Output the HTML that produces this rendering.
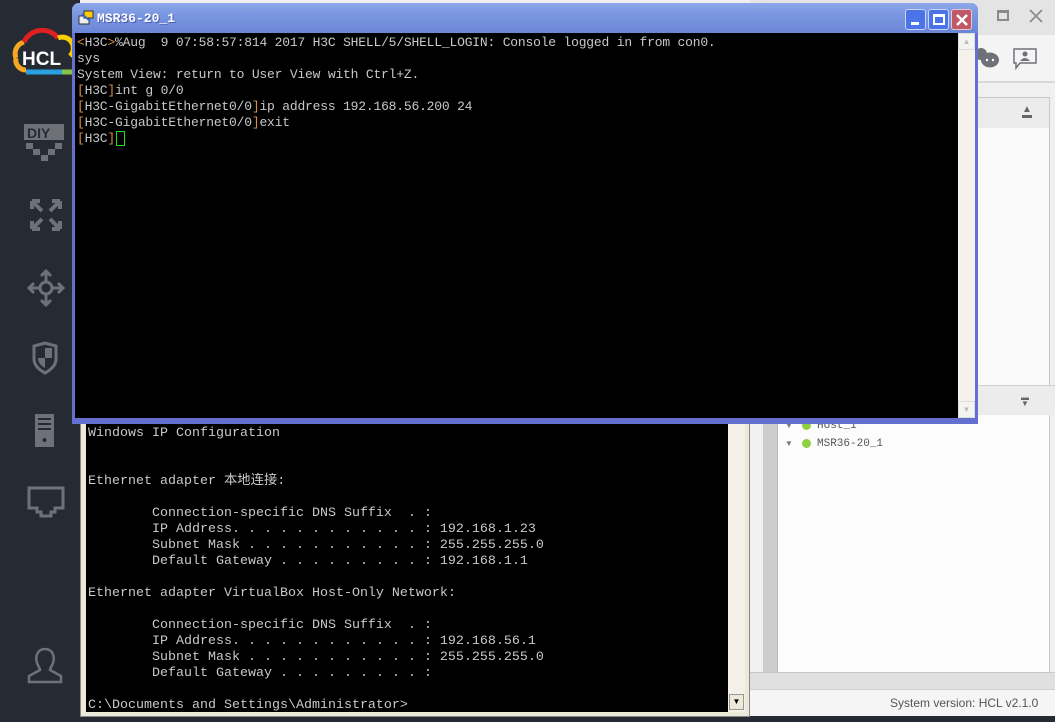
<!DOCTYPE html>
<html><head><meta charset="utf-8"><style>
*{margin:0;padding:0;box-sizing:border-box}
body{width:1055px;height:722px;overflow:hidden;position:relative;background:#f0f0f0;font-family:"Liberation Sans",sans-serif}
.abs{position:absolute}
.side{left:0;top:0;width:80px;height:722px;background:#262b33}
.mono{font-family:"Liberation Mono","Noto Sans CJK SC",monospace;font-size:13.33px;line-height:16px;white-space:pre}
</style></head><body>
<div class="abs side"></div>
<svg class="abs" style="left:8px;top:28px" width="66" height="50" viewBox="0 0 66 50">
<path d="M8 30 A12 12 0 0 1 16 14" stroke="#f5a623" stroke-width="5" fill="none"/>
<path d="M16 14 A20 20 0 0 1 50 10" stroke="#e02020" stroke-width="5" fill="none"/>
<path d="M50 10 A11 11 0 0 1 62 28" stroke="#f8d000" stroke-width="5" fill="none"/>
<path d="M8 30 A10 10 0 0 0 18 42" stroke="#f5a623" stroke-width="5" fill="none"/>
<path d="M18 44 H54" stroke="#2aa0e0" stroke-width="5"/>
<path d="M54 44 H64" stroke="#8bc34a" stroke-width="5"/>
<text x="14" y="37" font-family="Liberation Sans" font-weight="bold" font-size="19" fill="#fff">HCL</text>
</svg>
<svg class="abs" style="left:24px;top:124px" width="42" height="42" viewBox="0 0 42 42" fill="#6e7178">
<rect x="0" y="0" width="40" height="16"/><text x="3" y="14" font-family="Liberation Sans" font-weight="bold" font-size="14" fill="#262b33">DIY</text>
<rect x="2" y="19" width="7" height="6"/><rect x="31" y="19" width="7" height="6"/><rect x="9" y="25" width="7" height="6"/><rect x="24" y="25" width="7" height="6"/><rect x="17" y="31" width="7" height="6"/>
</svg>
<svg class="abs" style="left:29px;top:198px" width="34" height="34" viewBox="0 0 34 34" stroke="#6e7178" stroke-width="4" fill="none"><path d="M3 3 L13 13 M31 3 L21 13 M3 31 L13 21 M31 31 L21 21 M3 3h8M3 3v8M31 3h-8M31 3v8M3 31h8M3 31v-8M31 31h-8M31 31v-8"/></svg>
<svg class="abs" style="left:27px;top:269px" width="38" height="38" viewBox="0 0 38 38" stroke="#6e7178" stroke-width="3" fill="none"><circle cx="19" cy="19" r="6"/><path d="M19 2v11M19 25v11M2 19h11M25 19h11M14 7l5-5 5 5M14 31l5 5 5-5M7 14l-5 5 5 5M31 14l5 5-5 5"/></svg>
<svg class="abs" style="left:32px;top:341px" width="26" height="34" viewBox="0 0 26 34"><path d="M13 2 L24 5 V18 Q24 26 13 32 Q2 26 2 18 V5 Z" fill="none" stroke="#6e7178" stroke-width="3"/><path d="M13 7 H20 V17 H13 Z M6 17 H13 V27 Q6 23 6 17Z" fill="#6e7178"/></svg>
<svg class="abs" style="left:35px;top:414px" width="20" height="34" viewBox="0 0 20 34" fill="#6e7178"><rect width="19" height="33"/><rect x="3" y="4" width="13" height="2" fill="#262b33"/><rect x="3" y="9" width="13" height="2" fill="#262b33"/><rect x="3" y="14" width="13" height="2" fill="#262b33"/><circle cx="9.5" cy="26" r="2" fill="#262b33"/></svg>
<svg class="abs" style="left:27px;top:486px" width="38" height="32" viewBox="0 0 38 32" fill="none" stroke="#6e7178" stroke-width="3"><path d="M2 2 H36 V22 H28 V26 H24 V30 H14 V26 H10 V22 H2 Z"/></svg>
<svg class="abs" style="left:26px;top:646px" width="38" height="38" viewBox="0 0 38 38" fill="none" stroke="#6e7178" stroke-width="2.5"><path d="M19 3 C11 3 9 11 11 17 C12 20 14 22 14 24 L3 30 V36 H35 V30 L24 24 C24 22 26 20 27 17 C29 11 27 3 19 3Z"/></svg>

<div class="abs" style="left:750px;top:0;width:305px;height:35px;background:#e4e4e4"></div>
<div class="abs" style="left:997px;top:10px;width:12px;height:11px;border:2px solid #8a8a8a;border-top-width:3px"></div>
<svg class="abs" style="left:1029px;top:9px" width="14" height="14"><path d="M1 1L13 13M13 1L1 13" stroke="#8a8a8a" stroke-width="1.6"/></svg>
<div class="abs" style="left:750px;top:35px;width:305px;height:48px;background:#f4f4f4;border-bottom:2px solid #d8d8d8"></div>
<svg class="abs" style="left:976px;top:46px" width="24" height="24"><circle cx="5" cy="8" r="6" fill="#6e7178"/><ellipse cx="14" cy="14" rx="9" ry="7.5" fill="#6e7178"/><circle cx="11" cy="14" r="1.2" fill="#fff"/><circle cx="17" cy="14" r="1.2" fill="#fff"/></svg>
<svg class="abs" style="left:1013px;top:48px" width="24" height="22"><path d="M1 1H23V15H7L3 20V15H1Z" fill="#f4f4f4" stroke="#6e7178" stroke-width="1.5"/><circle cx="12" cy="6" r="2.5" fill="#6e7178"/><path d="M7 13Q12 7 17 13Z" fill="#6e7178"/></svg>
<div class="abs" style="left:765px;top:97px;width:285px;height:290px;background:#fafafa;border:1px solid #c8c8c8"></div>
<div class="abs" style="left:766px;top:98px;width:283px;height:30px;background:#ececec"></div>
<div class="abs" style="left:1022px;top:107px;font-size:10px;color:#666;line-height:6px">▲<br>▬</div>
<div class="abs" style="left:750px;top:385px;width:305px;height:30px;background:#ececec;border-top:1px solid #d0d0d0"></div>
<div class="abs" style="left:1021px;top:395px;font-size:8px;color:#666;line-height:6px">▬<br>▼</div>
<div class="abs" style="left:763px;top:415px;width:14px;height:258px;background:#cccccc"></div>
<div class="abs" style="left:777px;top:415px;width:273px;height:258px;background:#fcfcfc;border-left:1px solid #bbb;border-right:1px solid #ccc"></div>
<div class="abs" style="left:785px;top:421px;font-size:8px;color:#777">▼</div>
<div class="abs" style="left:802px;top:421px;width:9px;height:9px;border-radius:50%;background:#8fd040"></div>
<div class="abs mono" style="left:817px;top:418px;font-size:11px;color:#555">Host_1</div>
<div class="abs" style="left:785px;top:439px;font-size:8px;color:#777">▼</div>
<div class="abs" style="left:802px;top:439px;width:9px;height:9px;border-radius:50%;background:#8fd040"></div>
<div class="abs mono" style="left:817px;top:436px;font-size:11px;color:#555">MSR36-20_1</div>
<div class="abs" style="left:750px;top:672px;width:305px;height:17px;background:#e0e0e0;border-top:1px solid #c8c8c8"></div>
<div class="abs" style="left:750px;top:689px;width:305px;height:27px;background:#f5f5f5;border-top:1px solid #d0d0d0"></div>
<div class="abs" style="left:890px;top:696px;font-size:12px;color:#555">System version: HCL v2.1.0</div>
<div class="abs" style="left:0;top:716px;width:1055px;height:6px;background:#262b33"></div>

<div class="abs" style="left:80px;top:415px;width:670px;height:302px;background:#ece9d8;border:1px solid #888"></div>
<div class="abs" style="left:86px;top:415px;width:642px;height:297px;background:#000"></div>
<div class="abs" style="left:728px;top:415px;width:17px;height:297px;background:#f4f2e8"></div>
<div class="abs" style="left:729px;top:694px;width:15px;height:16px;background:#ece9d8;border:1px solid #999;font-size:8px;text-align:center;line-height:14px">▼</div>
<div class="abs mono" style="left:88px;top:426px;color:#c8c8c8">Windows IP Configuration


Ethernet adapter 本地连接:

        Connection-specific DNS Suffix  . :
        IP Address. . . . . . . . . . . . : 192.168.1.23
        Subnet Mask . . . . . . . . . . . : 255.255.255.0
        Default Gateway . . . . . . . . . : 192.168.1.1

Ethernet adapter VirtualBox Host-Only Network:

        Connection-specific DNS Suffix  . :
        IP Address. . . . . . . . . . . . : 192.168.56.1
        Subnet Mask . . . . . . . . . . . : 255.255.255.0
        Default Gateway . . . . . . . . . :

C:\Documents and Settings\Administrator></div>

<div class="abs" style="left:72px;top:3px;width:906px;height:421px;background:#6470d0;border-radius:7px 7px 0 0"></div>
<div class="abs" style="left:72px;top:3px;width:906px;height:30px;border-radius:7px 7px 0 0;background:linear-gradient(#8fa8ea,#7896e0 40%,#6c86d8)"></div>
<svg class="abs" style="left:78px;top:10px" width="16" height="16"><rect x="1" y="6" width="10" height="8" fill="#eee" stroke="#333"/><rect x="6" y="1" width="9" height="7" fill="#fc0" stroke="#333"/><path d="M4 4L12 11" stroke="#36c" stroke-width="2"/></svg>
<div class="abs mono" style="left:97px;top:11px;color:#fff;font-size:13px;font-weight:bold;text-shadow:1px 1px 0 #4a5cb0">MSR36-20_1</div>
<div class="abs" style="left:905px;top:9px;width:21px;height:21px;border-radius:3px;border:1px solid #c8d4f8;background:#4a74e8"><div style="position:absolute;left:5px;top:12px;width:8px;height:3px;background:#fff"></div></div>
<div class="abs" style="left:928px;top:9px;width:21px;height:21px;border-radius:3px;border:1px solid #c8d4f8;background:#4a74e8"><div style="position:absolute;left:4px;top:4px;width:12px;height:11px;border:2px solid #fff;border-top-width:3px"></div></div>
<div class="abs" style="left:951px;top:9px;width:21px;height:21px;border-radius:3px;border:1px solid #e8c8d0;background:#c05868"><svg style="position:absolute;left:4px;top:4px" width="12" height="12"><path d="M1 1L11 11M11 1L1 11" stroke="#fff" stroke-width="2.5"/></svg></div>
<div class="abs" style="left:75px;top:33px;width:883px;height:385px;background:#000"></div>
<div class="abs" style="left:958px;top:33px;width:17px;height:385px;background:#f4f2ea"></div>
<div class="abs" style="left:958px;top:33px;width:17px;height:17px;border:1px solid #ddd;background:#f4f4f0;font-size:8px;color:#bbb;text-align:center;line-height:15px">▲</div>
<div class="abs" style="left:958px;top:401px;width:17px;height:17px;border:1px solid #ddd;background:#f4f4f0;font-size:8px;color:#bbb;text-align:center;line-height:15px">▼</div>
<div class="abs mono" style="left:77px;top:35px;color:#c8c8c8;font-size:13px;letter-spacing:-0.2px"><span style="color:#d89040">&lt;</span>H3C<span style="color:#d89040">&gt;</span>%Aug  9 07:58:57:814 2017 H3C SHELL/5/SHELL_LOGIN: Console logged in from con0.
sys
System View: return to User View with Ctrl+Z.
<span style="color:#d89040">[</span>H3C<span style="color:#d89040">]</span>int g 0/0
<span style="color:#d89040">[</span>H3C-GigabitEthernet0/0<span style="color:#d89040">]</span>ip address 192.168.56.200 24
<span style="color:#d89040">[</span>H3C-GigabitEthernet0/0<span style="color:#d89040">]</span>exit
<span style="color:#d89040">[</span>H3C<span style="color:#d89040">]</span></div>
<div class="abs" style="left:116px;top:131px;width:9px;height:15px;border:1px solid #20e020"></div>
</body></html>
